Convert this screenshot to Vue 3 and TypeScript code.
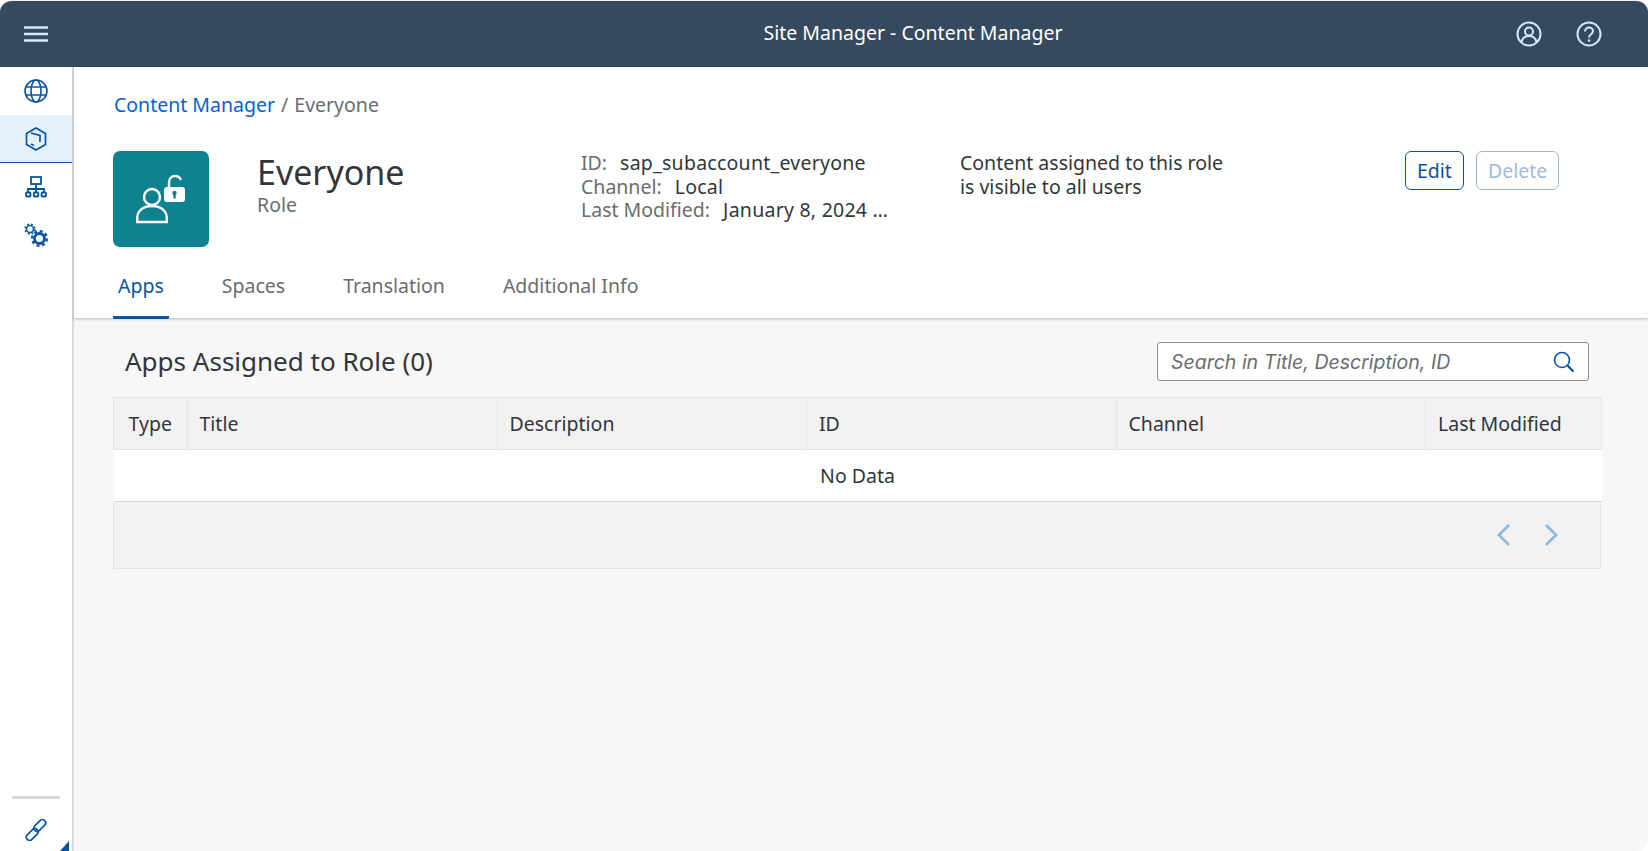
<script setup lang="ts">
const columns = [
  { label: 'Type', width: 73.5 },
  { label: 'Title', width: 310 },
  { label: 'Description', width: 309.5 },
  { label: 'ID', width: 309.5 },
  { label: 'Channel', width: 309.5 },
  { label: 'Last Modified', width: 176 },
];

const tabs = ['Apps', 'Spaces', 'Translation', 'Additional Info'];
</script>

<template>
  <div class="shell">
    <header class="topbar">
      <button class="bar-btn menu" aria-label="Menu">
        <svg width="24" height="16" viewBox="0 0 24 16"><path d="M0 1.5h24M0 8h24M0 14.5h24" stroke="#d1e8ff" stroke-width="2.4" /></svg>
      </button>
      <div class="bar-title">Site Manager - Content Manager</div>
      <div class="bar-actions">
        <svg width="26" height="26" viewBox="0 0 26 26" fill="none" stroke="#d1e8ff" stroke-width="2">
          <circle cx="13" cy="13" r="11.5" />
          <circle cx="13" cy="10.5" r="4" />
          <path d="M5.5 21c.8-3.6 3.8-6 7.5-6s6.700 2.400 7.500 6" />
        </svg>
        <svg width="26" height="26" viewBox="0 0 26 26" fill="none" stroke="#d1e8ff" stroke-width="2">
          <circle cx="13" cy="13" r="11.500" />
          <path d="M9 10.500c0-2.400 1.800-4 4-4s4 1.500 4 3.700c0 3-4 3-4 6.300" />
          <circle cx="13" cy="19.500" r="1.300" fill="#d1e8ff" stroke="none" />
        </svg>
      </div>
    </header>

    <div class="body">
      <nav class="sidebar">
        <div class="side-item">
          <svg width="24" height="24" viewBox="0 0 24 24" fill="none" stroke="#0854a0" stroke-width="1.600">
            <circle cx="12" cy="12" r="11" />
            <ellipse cx="12" cy="12" rx="5" ry="11" />
            <path d="M2 8h20M2 16h20" />
          </svg>
        </div>
        <div class="side-item active">
          <svg width="24" height="24" viewBox="0 0 24 24" fill="none" stroke="#0854a0" stroke-width="1.700">
            <path d="M12 1l9.500 5.500v11L12 23l-9.500-5.500v-11z" />
            <path d="M7 6l9 2.500v6.500M7 17l3 1.500" />
          </svg>
        </div>
        <div class="side-item">
          <svg width="22" height="22" viewBox="0 0 22 22" fill="none" stroke="#0854a0" stroke-width="1.800">
            <rect x="6" y="1" width="10" height="7" />
            <path d="M11 8v5M3 16v-3h16v3M11 13v3" />
            <rect x="1" y="16.500" width="4.500" height="4" rx="1" />
            <rect x="8.800" y="16.500" width="4.500" height="4" rx="1" />
            <rect x="16.500" y="16.500" width="4.500" height="4" rx="1" />
          </svg>
        </div>
        <div class="side-item">
          <svg width="25" height="25" viewBox="0 0 25 25" fill="none" stroke="#0854a0">
            <circle cx="6" cy="6" r="3.500" stroke-width="1.600" />
            <circle cx="6" cy="6" r="5" stroke-width="1.400" stroke-dasharray="2 2" />
            <circle cx="15.500" cy="15.500" r="5" stroke-width="2.800" />
            <circle cx="15.500" cy="15.500" r="7.400" stroke-width="2.400" stroke-dasharray="3 2.800" />
          </svg>
        </div>
        <div class="side-spacer"></div>
        <div class="side-rule"></div>
        <div class="side-link">
          <svg width="22" height="22" viewBox="0 0 22 22" fill="none" stroke="#0854a0" stroke-width="1.700">
            <rect x="11.500" y="-0.500" width="6.500" height="14" rx="3.250" transform="rotate(45 14.750 6.500)" />
            <rect x="4" y="8.500" width="6.500" height="14" rx="3.250" transform="rotate(45 7.250 15.500)" />
          </svg>
        </div>
        <span class="side-corner"></span>
      </nav>

      <main class="main">
        <section class="object-header">
          <div class="crumbs">
            <a class="crumb-link">Content Manager</a>
            <span class="crumb-sep">/</span>
            <span class="crumb-current">Everyone</span>
          </div>

          <div class="summary">
            <div class="role-icon">
              <svg width="62" height="50" viewBox="-1 0 62 50" fill="none" stroke="#fff" stroke-width="2.400">
                <circle cx="21" cy="23" r="8" />
                <path d="M6.200 48v-3.500C6.200 37 12 32 21 32s14.800 5 14.800 12.500V48z" />
                <rect x="33" y="13" width="21" height="15" rx="3" fill="#fff" stroke="none" />
                <path d="M38 13V8.500c0-4 2.500-6.500 6-6.500 2.800 0 5 1.400 6 4" />
                <circle cx="43.500" cy="19" r="2.200" fill="#0f828f" stroke="none" />
                <rect x="42.300" y="20" width="2.400" height="4.500" fill="#0f828f" stroke="none" />
              </svg>
            </div>
            <div class="role-name">
              <h1>Everyone</h1>
              <div class="role-type">Role</div>
            </div>
            <div class="meta">
              <div><span class="meta-key">ID:</span><span class="meta-val">sap_subaccount_everyone</span></div>
              <div><span class="meta-key">Channel:</span><span class="meta-val">Local</span></div>
              <div><span class="meta-key">Last Modified:</span><span class="meta-val">January 8, 2024 …</span></div>
            </div>
            <div class="note">Content assigned to this role<br />is visible to all users</div>
            <div class="buttons">
              <button class="btn">Edit</button>
              <button class="btn disabled" disabled>Delete</button>
            </div>
          </div>

          <div class="tabs">
            <div v-for="(tab, i) in tabs" :key="tab" class="tab" :class="{ selected: i === 0 }">{{ tab }}</div>
          </div>
        </section>

        <section class="content">
          <div class="toolbar">
            <h2>Apps Assigned to Role (0)</h2>
            <div class="search">
              <span class="placeholder">Search in Title, Description, ID</span>
              <svg width="22" height="22" viewBox="0 0 22 22" fill="none" stroke="#0854a0">
                <circle cx="9" cy="9" r="7.500" stroke-width="1.600" />
                <path d="M14.500 14.500l6 6" stroke-width="2.200" />
              </svg>
            </div>
          </div>

          <table class="grid">
            <colgroup>
              <col v-for="c in columns" :key="c.label" :style="{ width: c.width + 'px' }" />
            </colgroup>
            <thead>
              <tr>
                <th v-for="c in columns" :key="c.label">{{ c.label }}</th>
              </tr>
            </thead>
            <tbody>
              <tr>
                <td :colspan="columns.length">No Data</td>
              </tr>
            </tbody>
          </table>
          <div class="pager">
            <svg width="16" height="24" viewBox="0 0 16 24" fill="none" stroke="#93b8dc" stroke-width="2.800"><path d="M13 2L3 12l10 10" /></svg>
            <svg width="16" height="24" viewBox="0 0 16 24" fill="none" stroke="#93b8dc" stroke-width="2.800"><path d="M3 2l10 10L3 22" /></svg>
          </div>
        </section>
      </main>
    </div>
  </div>
</template>

<style>
html,
body {
  margin: 0;
  height: 100%;
  overflow: hidden;
  background: #fff;
}
</style>

<style scoped>
.shell {
  height: 851px;
  display: flex;
  flex-direction: column;
  font-family: "Noto Sans", Inter, sans-serif;
  color: #32363a;
  font-size: 19.5px;
  border-radius: 12px;
  border-top: 1px solid #f0f2f4;
  box-sizing: border-box;
  overflow: hidden;
}

.topbar {
  height: 66px;
  flex: none;
  background: #354a5f;
  display: flex;
  align-items: center;
}

.bar-btn {
  background: none;
  border: none;
  padding: 0;
  display: flex;
}

.menu {
  margin-left: 24px;
}

.bar-title {
  flex: 1;
  text-align: center;
  color: #fff;
  padding-left: 262px;
  line-height: 24px;
  margin-top: -2px;
}

.bar-actions {
  margin-right: 46px;
  display: flex;
  gap: 34px;
}

.body {
  flex: 1;
  display: flex;
  min-height: 0;
}

.sidebar {
  width: 72px;
  flex: none;
  border-right: 2px solid #d9d9d9;
  display: flex;
  flex-direction: column;
  position: relative;
  background: #fff;
}

.side-item {
  height: 48px;
  display: flex;
  align-items: center;
  justify-content: center;
}

.side-item.active {
  background: #e5f0fa;
  border-bottom: 1px solid #0854a0;
  box-sizing: border-box;
}

.side-spacer {
  flex: 1;
}

.side-rule {
  height: 3px;
  margin: 0 12px;
  background: #d9d9d9;
}

.side-link {
  height: 52px;
  padding-top: 20px;
  box-sizing: border-box;
  display: flex;
  justify-content: center;
}

.side-corner {
  position: absolute;
  right: 3px;
  bottom: 0;
  width: 0;
  height: 0;
  border-left: 9px solid transparent;
  border-bottom: 10px solid #0854a0;
}

.main {
  flex: 1;
  min-width: 0;
  background: #f7f7f7;
  display: flex;
  flex-direction: column;
}

.object-header {
  height: 251px;
  box-sizing: border-box;
  background: #fff;
  padding: 26px 0 0 39px;
  box-shadow: 0 1px 3px rgba(0, 0, 0, 0.25);
  position: relative;
  display: flex;
  flex-direction: column;
}

.crumbs {
  height: 24px;
  line-height: 24px;
  padding-left: 1px;
  display: flex;
  gap: 6px;
  white-space: nowrap;
}

.crumb-link {
  color: #0a62d0;
}

.crumb-sep,
.crumb-current {
  color: #6a6d70;
}

.summary {
  display: flex;
  margin-top: 34px;
  height: 96px;
}

.role-icon {
  width: 96px;
  height: 96px;
  flex: none;
  background: #0f828f;
  border-radius: 7px;
  display: flex;
  align-items: center;
  justify-content: center;
}

.role-name {
  margin-left: 48px;
  width: 324px;
  flex: none;
}

.role-name h1 {
  margin: 0;
  font-size: 34px;
  font-weight: 400;
  line-height: 42px;
}

.role-type {
  color: #6a6d70;
  line-height: 24px;
}

.meta {
  width: 379px;
  flex: none;
  line-height: 23.5px;
  white-space: nowrap;
}

.meta-key {
  color: #6a6d70;
  margin-right: 13px;
}

.meta-val {
  letter-spacing: 0.25px;
}

.note {
  width: 445px;
  flex: none;
  line-height: 24px;
}

.buttons {
  display: flex;
  gap: 12px;
  align-items: flex-start;
}

.btn {
  height: 39px;
  padding: 0 11px;
  font: inherit;
  color: #0854a0;
  background: #fff;
  border: 1px solid #0854a0;
  border-radius: 6px;
}

.btn.disabled {
  opacity: 0.4;
}

.tabs {
  display: flex;
  margin-top: 12px;
  gap: 48px;
  flex: 1;
}

.tab {
  padding: 0 5px;
  color: #6a6d70;
  line-height: 54px;
  height: 60px;
  box-sizing: border-box;
}

.tab.selected {
  color: #0854a0;
  border-bottom: 3px solid #0854a0;
  border-radius: 0 0 1px 1px;
}

.content {
  padding: 0 47px 0 39px;
  flex: 1;
}

.toolbar {
  height: 79px;
  display: flex;
  align-items: center;
  justify-content: space-between;
  padding: 8px 12px 0;
  box-sizing: border-box;
}

.toolbar h2 {
  margin: -2px 0 0;
  font-size: 26px;
  font-weight: 400;
}

.search {
  width: 432px;
  height: 39px;
  box-sizing: border-box;
  background: #fff;
  border: 1px solid #89919a;
  border-radius: 3px;
  display: flex;
  align-items: center;
  justify-content: space-between;
  padding: 0 13px;
}

.placeholder {
  color: #6a6d70;
  font-family: Inter, sans-serif;
  font-style: italic;
}

.grid {
  width: 1488px;
  border-collapse: collapse;
  table-layout: fixed;
}

.grid th {
  height: 52px;
  padding: 0 12px;
  background: #f2f2f2;
  border: 1px solid #e5e5e5;
  font-weight: 400;
  text-align: left;
  white-space: nowrap;
  box-sizing: border-box;
}

.grid th:first-child {
  padding: 0;
  text-align: center;
}

.grid td {
  height: 51px;
  background: #fff;
  text-align: center;
  padding: 0;
  border-bottom: 1px solid #d9d9d9;
}

.pager {
  width: 1488px;
  height: 67px;
  box-sizing: border-box;
  background: #f2f2f2;
  border: 1px solid #e5e5e5;
  border-top: none;
  display: flex;
  align-items: center;
  justify-content: flex-end;
  gap: 31px;
  padding-right: 41px;
}
</style>
